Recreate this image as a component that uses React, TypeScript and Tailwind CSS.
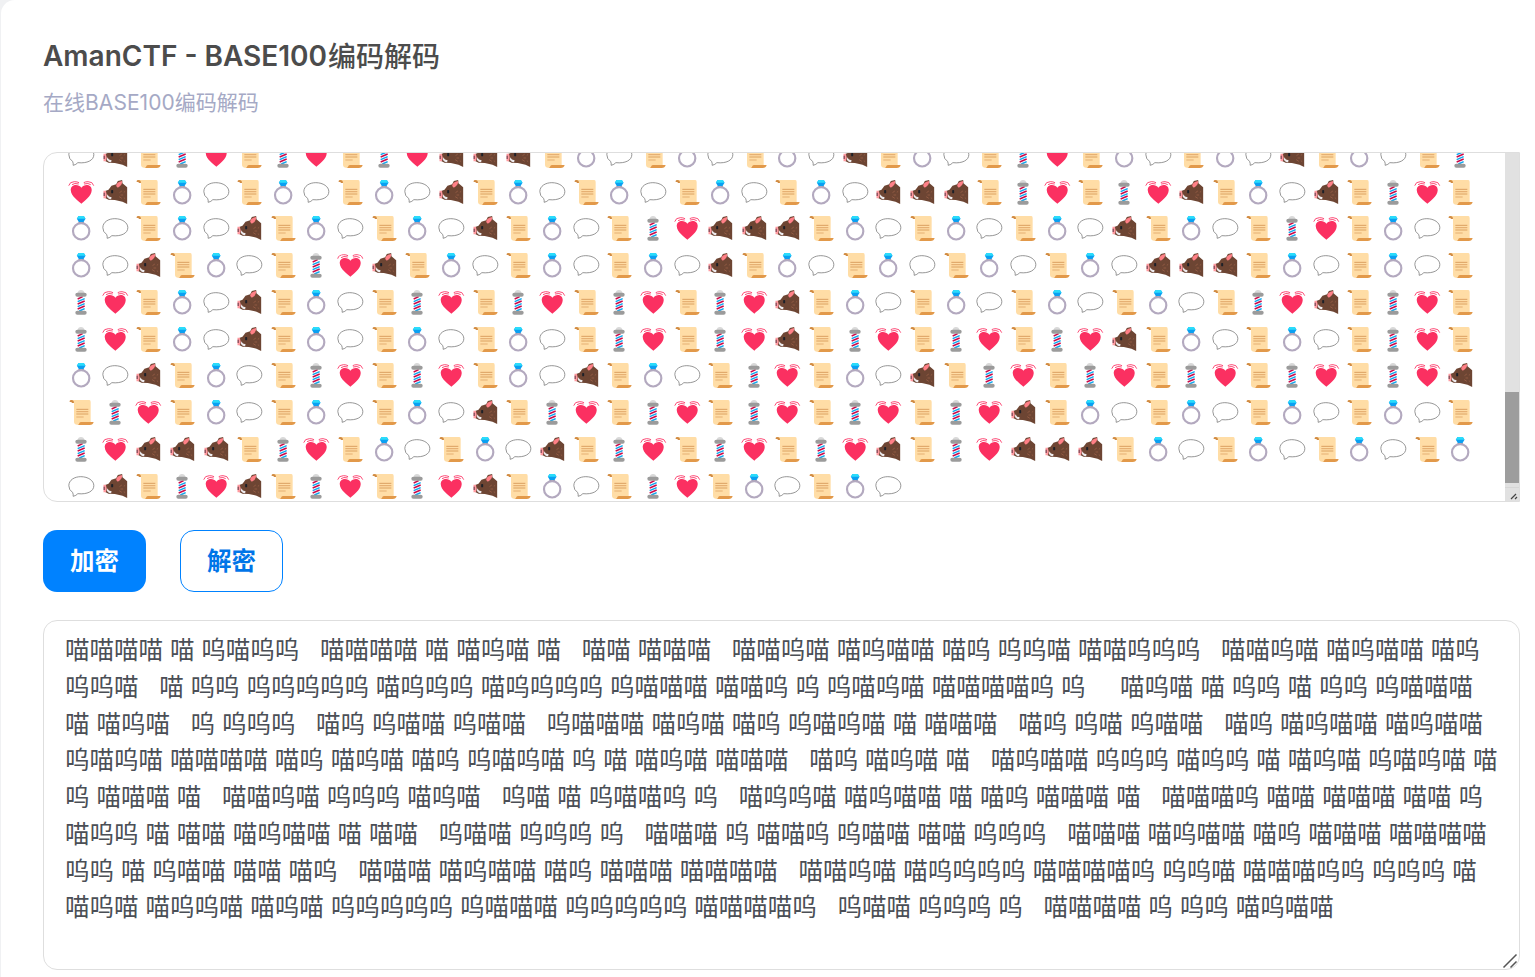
import React from "react";

const emojiRows: string[] = [
  "BGSPHSPHSPHGGGSRBSRBSRBGSRBSPHSRBSRBGSRBSP",
  "HGSRBSRBSRBGSRBSRBSRBSRBGGGSPHSPHGSRBGSPHS",
  "RBSRBGSRBSRBGSRBSPHGGGSRBSRBSRBGSRBSPHSRBS",
  "RBGSRBSPHGSRBSRBSRBGSRBSRBSRBSRBGGGSRBSRBS",
  "PHSRBGSRBSPHSPHSPHSPHGSRBSRBSRBSRBSPHGSPHS",
  "PHSRBGSRBSRBSRBSPHSPHGSPHSPHSPHGSRBSRBSPHS",
  "RBGSRBSPHSPHSRBGSRBSPHSRBGSPHSPHSPHSPHSPHG",
  "SPHSRBSRBSRBGSPHSPHSPHSPHSPHGSRBSRBSRBSRBS",
  "PHGGGSPHSRBSRBGSPHSPHSPHGSPHGGGSRBSRBSRBSR",
  "BGSPHGSPHSPHGSRBSPHSRBSRB",
];

const outputRows: string[] = [
  "喵喵喵喵 喵 呜喵呜呜   喵喵喵喵 喵 喵呜喵 喵   喵喵 喵喵喵   喵喵呜喵 喵呜喵喵 喵呜 呜呜喵 喵喵呜呜呜   喵喵呜喵 喵呜喵喵 喵呜",
  "呜呜喵   喵 呜呜 呜呜呜呜呜 喵呜呜呜 喵呜呜呜呜 呜喵喵喵 喵喵呜 呜 呜喵呜喵 喵喵喵喵呜 呜     喵呜喵 喵 呜呜 喵 呜呜 呜喵喵喵",
  "喵 喵呜喵   呜 呜呜呜   喵呜 呜喵喵 呜喵喵   呜喵喵喵 喵呜喵 喵呜 呜喵呜喵 喵 喵喵喵   喵呜 呜喵 呜喵喵   喵呜 喵呜喵喵 喵呜喵喵",
  "呜喵呜喵 喵喵喵喵 喵呜 喵呜喵 喵呜 呜喵呜喵 呜 喵 喵呜喵 喵喵喵   喵呜 喵呜喵 喵   喵呜喵喵 呜呜呜 喵呜呜 喵 喵呜喵 呜喵呜喵 喵",
  "呜 喵喵喵 喵   喵喵呜喵 呜呜呜 喵呜喵   呜喵 喵 呜喵喵呜 呜   喵呜呜喵 喵呜喵喵 喵 喵呜 喵喵喵 喵   喵喵喵呜 喵喵 喵喵喵 喵喵 呜",
  "喵呜呜 喵 喵喵 喵呜喵喵 喵 喵喵   呜喵喵 呜呜呜 呜   喵喵喵 呜 喵喵呜 呜喵喵 喵喵 呜呜呜   喵喵喵 喵呜喵喵 喵呜 喵喵喵 喵喵喵喵",
  "呜呜 喵 呜喵喵 喵喵 喵呜   喵喵喵 喵呜喵喵 喵呜 喵喵喵 喵喵喵喵   喵喵呜喵 喵呜呜呜呜 喵喵喵喵呜 呜呜喵 喵喵喵呜呜 呜呜呜 喵",
  "喵呜喵 喵呜呜喵 喵呜喵 呜呜呜呜呜 呜喵喵喵 呜呜呜呜呜 喵喵喵喵呜   呜喵喵 呜呜呜 呜   喵喵喵喵 呜 呜呜 喵呜喵喵",
];

function Heart() {
  return (
    <g transform="translate(-0.8 0)">
      <path d="M41 71C34 64 9 49 9 30C9 12 32 10 41 23C50 10 72 12 72 30C72 49 48 64 41 71Z" fill="#fb3061" />
      <g fill="none" stroke="#fb3061" strokeWidth="2.6">
        <path d="M3 17Q6 5 20 5Q28 5 34 8M13 14Q20 8 33 12" />
        <path d="M78 17Q75 5 61 5Q53 5 48 8M69 14Q62 8 49 12" />
      </g>
    </g>
  );
}

function Boar() {
  return (
    <g transform="translate(-0.5 0)">
      <path d="M10 33L20 29L29 17L43 13L48 3L61 0L62 10L76 22V72L62 65L39 60L20 59L10 54Z" fill="#6d4533" />
      <path d="M43 18Q43 6 61 3Q62 16 48 23Z" fill="#ff8087" />
      <path d="M5 32H12Q17 43 12 55H5Z" fill="#ff9aa0" />
      <path d="M7 38V48" stroke="#5b3442" strokeWidth="3" />
      <path d="M18 43Q19 52 29 51L28 58Q16 57 15 48Z" fill="#eeecef" />
      <rect x="28" y="30" width="6" height="10" rx="2" fill="#1d2028" />
      <path d="M53 38L60 33M56 45H64M52 50L60 55M66 37L70 34M66 53L70 56" stroke="#9c6148" strokeWidth="2.3" />
    </g>
  );
}

function Scroll() {
  return (
    <g transform="translate(1 0)">
      <path d="M9 0H63Q67 0 67 6V68Q62 75 32 75Q17 75 17 66V9Z" fill="#ffdda6" />
      <path d="M4 3Q4 0 9 0Q17 0 17 9H10V6H4Z" fill="#d18b42" />
      <path d="M33 69Q34 66 39 66H76Q74 75 64 75H28Q33 74 33 69Z" fill="#e2994a" />
      <path d="M24 28H60M24 42H60" stroke="#d89c5b" strokeWidth="2.8" />
      <path d="M24 35H60M24 51H46" stroke="#e6b073" strokeWidth="3.5" />
    </g>
  );
}

function Ring() {
  return (
    <g transform="translate(0.5 0)">
      <path d="M33 14H45L48 22H30Z" fill="#8e8ba8" />
      <circle cx="39" cy="46" r="24.5" fill="none" stroke="#b3a9bf" strokeWidth="6.5" />
      <path d="M31 0H47L52 8L46 18H32L26 8Z" fill="#0aa0f2" />
      <path d="M31 0H47L52 8H26Z" fill="#2bdcfb" />
    </g>
  );
}

function Bubble() {
  return (
    <path
      transform="translate(-0.5 0)"
      d="M16 67Q17 60 14 55Q3 48 3 35C3 18 20 8 39 8C61 8 78 20 78 35C78 52 58 62 30 59Q25 65 16 67Z"
      fill="#fff"
      stroke="#858585"
      strokeWidth="2.6"
    />
  );
}

function Pole() {
  return (
    <>
      <path d="M29 9Q30 0 39 0Q48 0 49 9Z" fill="#d9d9d9" />
      <rect x="29" y="18" width="21" height="46" fill="#fff" />
      <path d="M29 27L44 20M29 42L50 33M29 57L50 48" stroke="#ca0b4a" strokeWidth="4.5" />
      <path d="M29 35L50 26M29 50L50 41M34 63L50 56" stroke="#0da5ee" strokeWidth="4.5" />
      <rect x="22" y="8" width="34" height="12" rx="6" fill="#9b9b9b" />
      <rect x="22" y="62" width="34" height="12" rx="6" fill="#9b9b9b" />
    </>
  );
}

const glyphs: Record<string, () => React.ReactElement> = {
  H: Heart,
  G: Boar,
  S: Scroll,
  R: Ring,
  B: Bubble,
  P: Pole,
};

function EmojiLine({ codes }: { codes: string }) {
  return (
    <div className="flex h-[36.75px] shrink-0">
      {codes.split("").map((code, i) => {
        const Glyph = glyphs[code];
        return (
          <span key={i} className="w-[33.646px] shrink-0">
            <svg width="27" height="26" viewBox="0 0 81 78" className="block">
              <Glyph />
            </svg>
          </span>
        );
      })}
    </div>
  );
}

export default function App() {
  return (
    <div className="h-[977px] overflow-hidden bg-[#f0f1f3] pl-px font-['Inter','Noto_Sans_CJK_SC',sans-serif]">
      <main className="h-[1000px] rounded-tl-[14px] bg-white pl-[42px]">
        <header className="flex h-[152px] flex-col pt-[35px]">
          <h1 className="flex h-[42px] text-[28px] leading-[42px] font-medium whitespace-nowrap text-[#4c4c4c]">
            <span className="w-[285px] font-semibold">AmanCTF - BASE100</span>
            <span className="pt-px">编码解码</span>
          </h1>
          <p className="mt-[10px] h-[32px] text-[21px] leading-[32px] tracking-[0.04px] whitespace-nowrap text-[#a5a9c5]">
            在线BASE100编码解码
          </p>
        </header>

        <section className="flex h-[350px] w-[1477px] overflow-hidden rounded-l-[14px] border border-[#dedede]">
          <div className="flex flex-1 flex-col overflow-hidden pl-[24px]">
            <div className="-mt-[10.2px] flex flex-col">
              {emojiRows.map((codes, i) => (
                <EmojiLine key={i} codes={codes} />
              ))}
            </div>
          </div>
          <div className="flex w-[14px] flex-col bg-[#e1e1e1]">
            <div className="mt-[239px] h-[91px] bg-[#9d9d9d]" />
            <div className="mt-[4px] flex flex-1 items-end justify-end border-t border-[#d6d6d6]">
              <svg width="10" height="10" viewBox="0 0 10 10" fill="none" stroke="#444" strokeWidth="1.2">
                <path d="M2 8L7 3M6 8L8 6" />
              </svg>
            </div>
          </div>
        </section>

        <div className="mt-[28px] flex h-[62px] gap-[34px]">
          <button className="w-[103px] rounded-[14px] bg-[#0082ff] pt-[1px] text-[24.5px] font-semibold text-white">
            加密
          </button>
          <button className="w-[103px] rounded-[14px] border border-[#0082ff] pt-[1px] text-[24.5px] font-semibold text-[#0075e8]">
            解密
          </button>
        </div>

        <section className="relative mt-[28px] h-[350px] w-[1477px] rounded-[14px] border border-[#dedede] pt-[11.2px] pl-[21px]">
          {outputRows.map((row, i) => (
            <p key={i} className="h-[36.75px] text-[24.5px] leading-[36.75px] whitespace-pre text-[#4b4f56]">
              {row}
            </p>
          ))}
          <svg
            className="absolute right-[1px] bottom-0"
            width="16"
            height="16"
            viewBox="0 0 16 16"
            fill="none"
            stroke="#555"
            strokeWidth="1.5"
          >
            <path d="M1.5 14.5L14.5 1.5M8.5 14.5L14.5 8.5" />
          </svg>
        </section>
      </main>
    </div>
  );
}
